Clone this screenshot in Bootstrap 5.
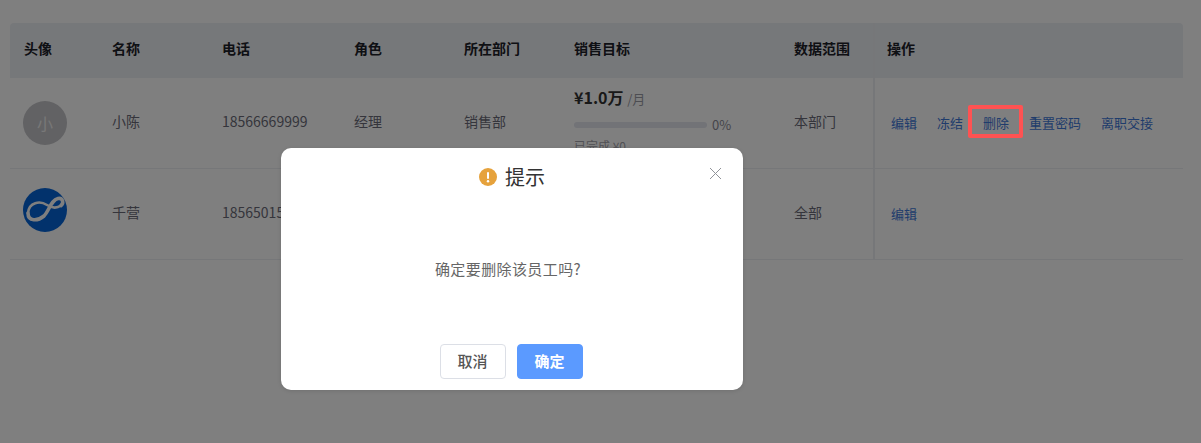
<!DOCTYPE html>
<html lang="zh-CN">
<head>
    <meta charset="UTF-8">
    <title>员工管理</title>
    <link href="https://cdn.jsdelivr.net/npm/bootstrap@5.3.3/dist/css/bootstrap.min.css" rel="stylesheet">
    <style>
        html, body { height: 443px; overflow: hidden; }
        body { font-family: "Noto Sans CJK SC", "Noto Sans", sans-serif; font-size: 14px; color: #6e6e7e; background: #fff; }
        .staff-wrap { padding: 23px 18px 0 10px; }
        .staff-table { table-layout: fixed; width: 1173px; margin: 0; }
        .staff-table > :not(caption) > * > * { padding: 0 0 2px 14px; vertical-align: middle; color: #6b6b78; border-bottom: 1px solid #eceef2; background: transparent; box-shadow: none; }
        .staff-table thead th { height: 55px; padding-bottom: 4px; background: #edf0f4; color: #1d2129; font-weight: 700; border-bottom: 0; }
        .staff-table thead th:first-child { border-top-left-radius: 4px; }
        .staff-table thead th:last-child { border-top-right-radius: 4px; }
        .staff-table tbody tr:nth-child(1) td { height: 90px; }
        .staff-table tbody tr:nth-child(2) td { height: 91px; }
        .staff-table tbody tr:nth-child(1) td:first-child { padding-bottom: 0; }
        .staff-table tbody tr:nth-child(2) td:first-child { padding-bottom: 7px; }
        .staff-table .op-col { border-left: 2px solid #eceef2; padding-left: 12px; }
        .staff-table tbody .op-col { padding-bottom: 0; }
        .staff-avatar { width: 44px; height: 44px; border-radius: 50%; display: flex; align-items: center; justify-content: center; background: #c4c4c8; color: #f0f0f0; font-size: 16px; margin-left: -1px; }
        .staff-logo { display: block; margin-left: -1px; }
        .target-money { font-size: 16px; font-weight: 700; color: #333; line-height: 20px; margin-top: -2px; }
        .target-unit { font-size: 13px; font-weight: 400; color: #9a9aa4; }
        .target-bar { width: 133px; height: 6px; background: #e4e6ee; border-radius: 3px; }
        .target-pct { font-size: 13px; line-height: 16px; color: #8a8a96; margin-left: 5px; }
        .target-done { font-size: 12px; line-height: 16px; color: #a2a2aa; margin-top: 5px; }
        .op-links { display: flex; gap: 20px; padding-left: 4px; white-space: nowrap; font-size: 13px; }
        .op-link { color: #3f78d8; text-decoration: none; }
        .page-mask { position: absolute; inset: 0; background: rgba(0, 0, 0, .5); }
        .mark-box { position: absolute; left: 968px; top: 105px; width: 55px; height: 33px; border: 4px solid #ff5252; border-radius: 2px; }
        .tip-dialog { position: absolute; left: 281px; top: 148px; width: 462px; height: 242px; background: #fff; border-radius: 10px; box-shadow: 0 1px 4px rgba(0, 0, 0, .12); }
        .tip-head { height: 58px; padding-top: 14px; font-size: 20px; line-height: 29px; color: #333; }
        .tip-head svg { margin-top: 6px; }
        .tip-close { position: absolute; right: 21px; top: 19px; line-height: 0; }
        .tip-body { height: 125px; font-size: 15px; letter-spacing: .4px; color: #666; padding-top: 1px; padding-right: 8px; }
        .tip-foot { display: flex; justify-content: center; gap: 11px; margin-top: 13px; padding-right: 2px; }
        .tip-btn { width: 66px; height: 35px; padding: 0; font-size: 15px; border-radius: 4px; }
        .tip-cancel { background: #fff; border: 1px solid #dcdfe6; color: #555; font-weight: 500; }
        .tip-ok { background: #5b9aff; border: 1px solid #5b9aff; color: #fff; font-weight: 700; }
    </style>
</head>
<body>
<div class="staff-wrap">
    <table class="table staff-table">
        <colgroup>
            <col style="width:88px"><col style="width:110px"><col style="width:132px"><col style="width:110px">
            <col style="width:110px"><col style="width:220px"><col style="width:94px"><col>
        </colgroup>
        <thead>
        <tr>
            <th>头像</th><th>名称</th><th>电话</th><th>角色</th><th>所在部门</th><th>销售目标</th><th>数据范围</th><th class="op-col">操作</th>
        </tr>
        </thead>
        <tbody>
        <tr>
            <td><div class="staff-avatar">小</div></td>
            <td>小陈</td>
            <td>18566669999</td>
            <td>经理</td>
            <td>销售部</td>
            <td>
                <div class="target-money">¥1.0万 <span class="target-unit">/月</span></div>
                <div class="d-flex align-items-center mt-2">
                    <div class="target-bar"></div>
                    <span class="target-pct">0%</span>
                </div>
                <div class="target-done">已完成 ¥0</div>
            </td>
            <td>本部门</td>
            <td class="op-col">
                <div class="op-links">
                    <a class="op-link" href="#">编辑</a>
                    <a class="op-link" href="#">冻结</a>
                    <a class="op-link" href="#">删除</a>
                    <a class="op-link" href="#">重置密码</a>
                    <a class="op-link" href="#">离职交接</a>
                </div>
            </td>
        </tr>
        <tr>
            <td>
                <svg class="staff-logo" width="44" height="44" viewBox="0 0 44 44">
                    <circle cx="22" cy="22" r="22" fill="#0564d8"/>
                    <path d="M38 17.500C33 21 28 19.500 24 17C17 12.500 6 14 5 25" fill="none" stroke="#fff" stroke-width="2.600" stroke-linecap="round"/>
                    <path d="M5 25C5 34 15 33 21 28C26 23 28 12 35 10.500C40 9.500 41 15 38 17.500" fill="none" stroke="#fff" stroke-width="3.600" stroke-linecap="round"/>
                </svg>
            </td>
            <td>千营</td>
            <td>18565015888</td>
            <td>老板</td>
            <td>总经办</td>
            <td>-</td>
            <td>全部</td>
            <td class="op-col"><div class="op-links"><a class="op-link" href="#">编辑</a></div></td>
        </tr>
        </tbody>
    </table>
</div>

<div class="page-mask"></div>
<div class="mark-box"></div>

<div class="tip-dialog">
    <div class="tip-head d-flex justify-content-center align-items-start gap-2">
        <svg width="18" height="18" viewBox="0 0 18 18">
            <circle cx="9" cy="9" r="9" fill="#e6a23c"/>
            <rect x="8" y="4" width="2" height="7" rx="1" fill="#fff"/>
            <circle cx="9" cy="13.300" r="1.200" fill="#fff"/>
        </svg>
        <span>提示</span>
    </div>
    <div class="tip-close">
        <svg width="13" height="13" viewBox="0 0 13 13"><path d="M1 1L12 12M12 1L1 12" stroke="#909399" stroke-width="1" fill="none"/></svg>
    </div>
    <div class="tip-body d-flex align-items-center justify-content-center">确定要删除该员工吗?</div>
    <div class="tip-foot">
        <button type="button" class="btn tip-btn tip-cancel">取消</button>
        <button type="button" class="btn tip-btn tip-ok">确定</button>
    </div>
</div>
<script src="https://cdn.jsdelivr.net/npm/bootstrap@5.3.3/dist/js/bootstrap.bundle.min.js"></script>
</body>
</html>
